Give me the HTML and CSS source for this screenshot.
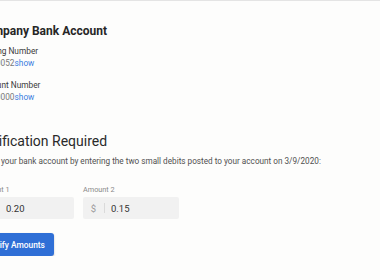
FILE: index.html
```html
<!DOCTYPE html>
<html lang="en">
<head>
    <meta charset="UTF-8">
    <meta name="viewport" content="width=device-width, initial-scale=1.0">
    <title>Bank Account</title>
    <link rel="stylesheet" href="styles.css">
</head>
<body>
    <div class="page">
        <h2 class="title">Company Bank Account</h2>
        <div class="detail">
            <div class="detail-label">Routing Number</div>
            <div class="detail-value">*****0052<a href="#" class="show">show</a></div>
        </div>
        <div class="detail">
            <div class="detail-label">Account Number</div>
            <div class="detail-value">*****0000<a href="#" class="show">show</a></div>
        </div>

        <h3 class="heading">Verification Required</h3>
        <p class="desc">Verify your bank account by entering the two small debits posted to your account on 3/9/2020:</p>

        <div class="amounts">
            <div class="amount">
                <label class="amount-label">Amount 1</label>
                <div class="field">
                    <span class="prefix">$</span>
                    <span class="sep"></span>
                    <input class="field-input" type="text" value="0.20">
                </div>
            </div>
            <div class="amount">
                <label class="amount-label">Amount 2</label>
                <div class="field">
                    <span class="prefix">$</span>
                    <span class="sep"></span>
                    <input class="field-input" type="text" value="0.15">
                </div>
            </div>
        </div>

        <button class="verify">Verify Amounts</button>
    </div>
</body>
</html>
```

FILE: styles.css
```css
body {
    margin: 0;
    background: #fdfdfc;
    font-family: Roboto, "Liberation Sans", sans-serif;
    overflow: hidden;
}
.page {
    border-top: 1px solid #e4e4e4;
    padding-top: 22px;
    margin-left: -22px;
}
.title {
    margin: 0 0 6px;
    font-size: 12px;
    line-height: 16px;
    font-weight: 700;
    color: #262626;
}
.detail {
    margin-bottom: 10px;
}
.detail-label {
    font-size: 8.3px;
    line-height: 12px;
    color: #3a3a3a;
}
.detail-value {
    font-size: 8.3px;
    line-height: 12px;
    color: #777;
}
.show {
    color: #3b7de0;
    text-decoration: none;
}
.heading {
    margin: 29px 0 5px;
    font-size: 14px;
    line-height: 18px;
    font-weight: 400;
    color: #2a2a2a;
}
.desc {
    margin: 0 0 18px;
    font-size: 8.2px;
    line-height: 12px;
    color: #505050;
}
.amounts {
    display: grid;
    grid-template-columns: 96px 96px;
    gap: 9px;
}
.amount-label {
    display: block;
    font-size: 7.3px;
    line-height: 10px;
    color: #8a8a8a;
    margin-bottom: 2px;
}
.field {
    display: flex;
    align-items: center;
    height: 22px;
    background: #f1f1f1;
    border-radius: 2px;
}
.prefix {
    width: 21px;
    text-align: center;
    font-size: 9.5px;
    color: #9a9a9a;
}
.sep {
    width: 1px;
    height: 10px;
    background: #dadada;
}
.field-input {
    flex: 1;
    min-width: 0;
    border: none;
    background: transparent;
    padding: 0 0 0 6px;
    font-family: inherit;
    font-size: 9.5px;
    color: #333;
    outline: none;
}
.verify {
    margin-top: 14px;
    height: 23px;
    padding: 0 9px;
    border: none;
    border-radius: 3px;
    background: #2f6fd6;
    box-shadow: 0 1px 2px rgba(0, 0, 0, 0.25);
    color: #fff;
    font-family: inherit;
    font-size: 8.4px;
    font-weight: 500;
    cursor: pointer;
}
```
